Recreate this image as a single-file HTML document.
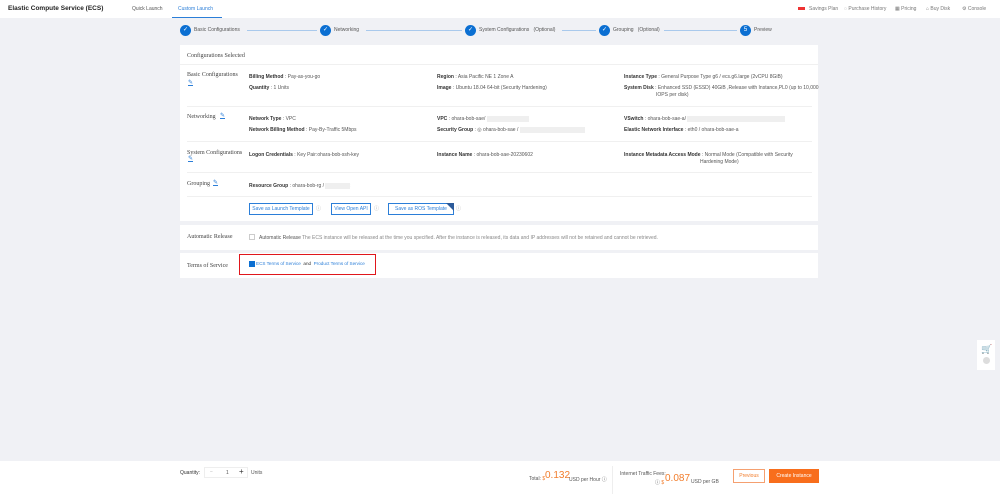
<!DOCTYPE html>
<html><head><style>
*{margin:0;padding:0;box-sizing:border-box}
body{width:1000px;height:496px;background:#f0f1f5;font-family:"Liberation Sans",sans-serif;position:relative;overflow:hidden;color:#333}
.a{position:absolute;white-space:nowrap}
.hdr{position:absolute;left:0;top:0;width:1000px;height:18px;background:#fff}
.t5{font-size:5px;color:#555}
.b{font-weight:bold;color:#333}
.lbl{font-family:"Liberation Serif",serif;font-size:6px;color:#444}
.card{position:absolute;left:180px;width:638px;background:#fff}
.circ{position:absolute;width:11px;height:11px;border-radius:50%;background:#0b6fd2;color:#fff;font-size:6px;text-align:center;line-height:11px}
.line{position:absolute;height:1px;background:#a9c9ec;top:30px}
.sep{position:absolute;height:1px;background:#f0f0f0;left:187px;width:625px}
.btn{position:absolute;top:203px;height:12px;border:1px solid #2b7ed8;font-size:5px;color:#2b7ed8;text-align:center;line-height:10px}
.pen{position:absolute;width:5px;height:5px;border-bottom:1px solid #2b7ed8;font-size:6px;color:#2b7ed8;line-height:4px}
.blur{background:#efefef;color:#efefef}
</style></head><body>
<div class="hdr"></div>
<div class="a" style="left:8px;top:5px;font-size:6.5px;font-weight:bold;color:#222">Elastic Compute Service (ECS)</div>
<div class="a t5" style="left:132px;top:6px">Quick Launch</div>
<div class="a t5" style="left:178px;top:6px;color:#2b7ed8">Custom Launch</div>
<div class="a" style="left:172px;top:17px;width:50px;height:1px;background:#2b7ed8"></div>
<div class="a" style="left:798px;top:7px;width:7px;height:3px;background:#e33"></div>
<div class="a t5" style="left:809px;top:6px;color:#777">Savings Plan</div>
<div class="a t5" style="left:844px;top:6px;color:#777">◌ Purchase History</div>
<div class="a t5" style="left:895px;top:6px;color:#777">▦ Pricing</div>
<div class="a t5" style="left:926px;top:6px;color:#777">⌂ Buy Disk</div>
<div class="a t5" style="left:962px;top:6px;color:#777">⚙ Console</div>

<div class="circ" style="left:180px;top:25px">✓</div><div class="a t5" style="left:194px;top:27px">Basic Configurations</div>
<div class="line" style="left:247px;width:70px"></div>
<div class="circ" style="left:320px;top:25px">✓</div><div class="a t5" style="left:334px;top:27px">Networking</div>
<div class="line" style="left:366px;width:96px"></div>
<div class="circ" style="left:465px;top:25px">✓</div><div class="a t5" style="left:479px;top:27px">System Configurations &nbsp; (Optional)</div>
<div class="line" style="left:562px;width:34px"></div>
<div class="circ" style="left:599px;top:25px">✓</div><div class="a t5" style="left:613px;top:27px">Grouping &nbsp; (Optional)</div>
<div class="line" style="left:664px;width:73px"></div>
<div class="circ" style="left:740px;top:25px">5</div><div class="a t5" style="left:754px;top:27px">Preview</div>

<div class="card" style="top:45px;height:176px"></div>
<div class="a lbl" style="left:187px;top:53px">Configurations Selected</div>
<div class="a" style="left:180px;top:64px;width:638px;height:1px;background:#f0f0f0"></div>

<div class="a lbl" style="left:187px;top:72px">Basic Configurations</div>
<div class="pen" style="left:188px;top:81px">✎</div>
<div class="a t5" style="left:249px;top:74px"><span class="b">Billing Method</span> : Pay-as-you-go</div>
<div class="a t5" style="left:249px;top:85px"><span class="b">Quantity</span> : 1 Units</div>
<div class="a t5" style="left:437px;top:74px"><span class="b">Region</span> : Asia Pacific NE 1 Zone A</div>
<div class="a t5" style="left:437px;top:85px"><span class="b">Image</span> : Ubuntu 18.04 64-bit (Security Hardening)</div>
<div class="a t5" style="left:624px;top:74px"><span class="b">Instance Type</span> : General Purpose Type g6 / ecs.g6.large (2vCPU 8GiB)</div>
<div class="a t5" style="left:624px;top:85px;line-height:7px"><span class="b">System Disk</span> : Enhanced SSD (ESSD) 40GiB ,Release with Instance,PL0 (up to 10,000<br><span style="padding-left:32px">IOPS per disk)</span></div>
<div class="sep" style="top:106px"></div>

<div class="a lbl" style="left:187px;top:114px">Networking</div>
<div class="pen" style="left:220px;top:114px">✎</div>
<div class="a t5" style="left:249px;top:116px"><span class="b">Network Type</span> : VPC</div>
<div class="a t5" style="left:249px;top:127px"><span class="b">Network Billing Method</span> : Pay-By-Traffic 5Mbps</div>
<div class="a t5" style="left:437px;top:116px"><span class="b">VPC</span> : ohara-bob-sae/ <span class="blur">xxxxxxxxxxxxxxxxx</span></div>
<div class="a t5" style="left:437px;top:127px"><span class="b">Security Group</span> : ◎ ohara-bob-sae / <span class="blur">xxxxxxxxxxxxxxxxxxxxxxxxxx</span></div>
<div class="a t5" style="left:624px;top:116px"><span class="b">VSwitch</span> : ohara-bob-sae-a/ <span class="blur">xxxxxxxxxxxxxxxxxxxxxxxxxxxxxxxxxxxxxxx</span></div>
<div class="a t5" style="left:624px;top:127px"><span class="b">Elastic Network Interface</span> : eth0 / ohara-bob-sae-a</div>
<div class="sep" style="top:141px"></div>

<div class="a lbl" style="left:187px;top:150px">System Configurations</div>
<div class="pen" style="left:188px;top:157px">✎</div>
<div class="a t5" style="left:249px;top:152px"><span class="b">Logon Credentials</span> : Key Pair:ohara-bob-ssh-key</div>
<div class="a t5" style="left:437px;top:152px"><span class="b">Instance Name</span> : ohara-bob-sae-20230602</div>
<div class="a t5" style="left:624px;top:152px;line-height:7px"><span class="b">Instance Metadata Access Mode</span> : Normal Mode (Compatible with Security<br><span style="padding-left:76px">Hardening Mode)</span></div>
<div class="sep" style="top:172px"></div>

<div class="a lbl" style="left:187px;top:181px">Grouping</div>
<div class="pen" style="left:213px;top:181px">✎</div>
<div class="a t5" style="left:249px;top:183px"><span class="b">Resource Group</span> : ohara-bob-rg / <span class="blur">xxxxxxxxxx</span></div>
<div class="sep" style="top:196px"></div>

<div class="btn" style="left:249px;width:64px">Save as Launch Template</div>
<div class="a t5" style="left:316px;top:205px;color:#aaa">ⓘ</div>
<div class="btn" style="left:331px;width:40px">View Open API</div>
<div class="a t5" style="left:374px;top:205px;color:#aaa">ⓘ</div>
<div class="btn" style="left:388px;width:66px">Save as ROS Template</div>
<div class="a" style="left:446px;top:203px;width:0;height:0;border-top:8px solid #2b5a9a;border-left:8px solid transparent"></div>
<div class="a t5" style="left:456px;top:205px;color:#aaa">ⓘ</div>

<div class="card" style="top:225px;height:25px"></div>
<div class="a lbl" style="left:187px;top:234px">Automatic Release</div>
<div class="a" style="left:249px;top:234px;width:6px;height:6px;border:1px solid #ccc"></div>
<div class="a t5" style="left:259px;top:235px">Automatic Release</div>
<div class="a t5" style="left:302px;top:235px;color:#888">The ECS instance will be released at the time you specified. After the instance is released, its data and IP addresses will not be retained and cannot be retrieved.</div>

<div class="card" style="top:253px;height:25px"></div>
<div class="a lbl" style="left:187px;top:263px">Terms of Service</div>
<div class="a" style="left:239px;top:254px;width:137px;height:21px;border:1.5px solid #e0161c"></div>
<div class="a" style="left:249px;top:261px;width:6px;height:6px;background:#0b6fd2"></div>
<div class="a" style="left:256px;top:261px;font-size:4.6px;color:#2b7ed8">ECS Terms of Service <span style="color:#333">&nbsp;and&nbsp;</span> Product Terms of Service</div>

<div class="a" style="left:977px;top:340px;width:18px;height:30px;background:#fff"></div>
<div class="a" style="left:981px;top:344px;font-size:9px;color:#f27d2c">🛒</div>
<div class="a" style="left:983px;top:357px;width:7px;height:7px;border-radius:50%;background:#ddd"></div>

<div class="a" style="left:0;top:461px;width:1000px;height:35px;background:#fff"></div>
<div class="a t5" style="left:180px;top:470px;color:#333">Quantity:</div>
<div class="a" style="left:204px;top:467px;width:44px;height:11px;border:1px solid #eee"></div>
<div class="a t5" style="left:210px;top:469px;color:#aaa">−</div>
<div class="a t5" style="left:226px;top:470px">1</div>
<div class="a" style="left:239px;top:467px;font-size:8px;color:#333;line-height:10px">+</div>
<div class="a t5" style="left:251px;top:470px">Units</div>
<div class="a t5" style="left:529px;top:476px">Total: <span style="color:#f27d2c">$</span></div>
<div class="a" style="left:545px;top:470px;font-size:10px;color:#f27d2c">0.132</div>
<div class="a t5" style="left:569px;top:476px">USD per Hour ⓘ</div>
<div class="a" style="left:612px;top:466px;width:1px;height:28px;background:#eee"></div>
<div class="a t5" style="left:620px;top:471px">Internet Traffic Fees:</div>
<div class="a t5" style="left:655px;top:479px">ⓘ <span style="color:#f27d2c">$</span></div>
<div class="a" style="left:665px;top:473px;font-size:10px;color:#f27d2c">0.087</div>
<div class="a t5" style="left:691px;top:479px">USD per GB</div>
<div class="a" style="left:733px;top:469px;width:32px;height:14px;border:1px solid #f5a070;font-size:5px;color:#f27d2c;text-align:center;line-height:12px">Previous</div>
<div class="a" style="left:769px;top:469px;width:50px;height:14px;background:#f86e1c;font-size:5px;color:#fff;text-align:center;line-height:14px">Create Instance</div>
</body></html>
